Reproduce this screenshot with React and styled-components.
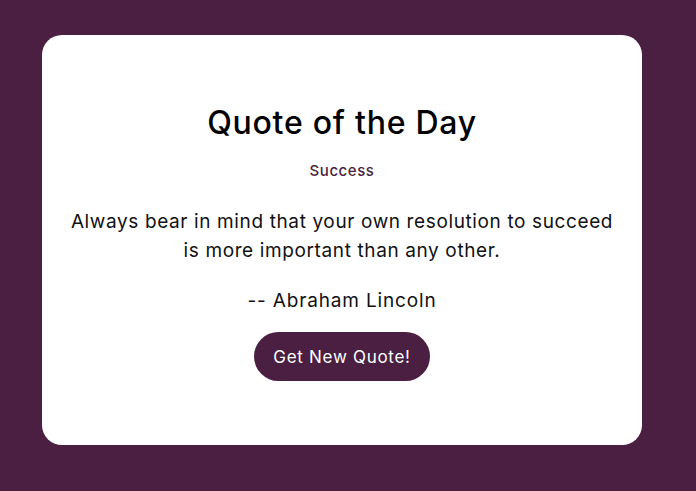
import React from "react";
import styled, { createGlobalStyle } from "styled-components";

const Global = createGlobalStyle`
  html, body { margin: 0; padding: 0; background: #4a1f42; }
  body { font-family: Inter, "Open Sans", sans-serif; }
`;

const Page = styled.div`
  min-height: 491px;
  padding: 35px 54px 46px 42px;
  box-sizing: border-box;
`;

const Card = styled.div`
  width: 600px;
  height: 410px;
  background: #fff;
  border-radius: 20px;
  box-sizing: border-box;
  padding: 69px 24px 0;
  display: flex;
  flex-direction: column;
  align-items: center;
  text-align: center;
`;

const Title = styled.h1`
  margin: 0;
  font-size: 32px;
  font-weight: 500;
  letter-spacing: 0.75px;
  line-height: 1.2;
  color: #000;
`;

const Category = styled.div`
  margin-top: 19px;
  font-size: 15px;
  font-weight: 500;
  letter-spacing: 0.55px;
  color: #4a1f42;
`;

const Quote = styled.p`
  margin: 27px 0 0;
  font-size: 19px;
  line-height: 29px;
  letter-spacing: 0.62px;
  color: #111;
`;

const Author = styled.p`
  margin: 24px 0 0;
  font-size: 19px;
  letter-spacing: 0.85px;
  color: #111;
`;

const Button = styled.button`
  margin-top: 20px;
  height: 49px;
  padding: 0 19px;
  border: none;
  border-radius: 25px;
  background: #4a1f42;
  color: #fff;
  font-family: inherit;
  font-size: 17px;
  font-weight: 400;
  letter-spacing: 0.7px;
  cursor: pointer;
`;

export default function App() {
  return (
    <>
      <Global />
      <Page>
        <Card>
          <Title>Quote of the Day</Title>
          <Category>Success</Category>
          <Quote>
            Always bear in mind that your own resolution to succeed
            <br />
            is more important than any other.
          </Quote>
          <Author>-- Abraham Lincoln</Author>
          <Button>Get New Quote!</Button>
        </Card>
      </Page>
    </>
  );
}
